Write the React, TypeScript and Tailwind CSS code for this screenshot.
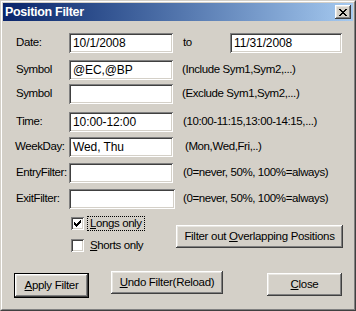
import { ReactNode } from 'react';

const raised =
  'bg-[#d4d0c8] shadow-[inset_-1px_-1px_#404040,inset_1px_1px_#ffffff,inset_-2px_-2px_#808080,inset_2px_2px_#e8e6e1]';
const sunken =
  'bg-white shadow-[inset_1px_1px_#808080,inset_-1px_-1px_#ffffff,inset_2px_2px_#404040,inset_-2px_-2px_#d4d0c8]';

const ROWS = [
  { label: 'Symbol', value: '@EC,@BP', hint: '(Include Sym1,Sym2,...)', mt: 'mt-[7px]', hintMl: 'ml-[9px]', w: 'w-[104px]' },
  { label: 'Symbol', value: '', hint: '(Exclude Sym1,Sym2,...)', mt: 'mt-[4px]', hintMl: 'ml-[9px]', w: 'w-[104px]' },
  { label: 'Time:', value: '10:00-12:00', hint: '(10:00-11:15,13:00-14:15,...)', mt: 'mt-[8px]', hintMl: 'ml-[10px]', w: 'w-[104px]' },
  { label: 'WeekDay:', value: 'Wed, Thu', hint: '(Mon,Wed,Fri,..)', mt: 'mt-[5px]', hintMl: 'ml-[12px]', w: 'w-[104px]' },
  { label: 'EntryFilter:', value: '', hint: '(0=never, 50%, 100%=always)', mt: 'mt-[6px]', hintMl: 'ml-[10px]', w: 'w-[104px]' },
  { label: 'ExitFilter:', value: '', hint: '(0=never, 50%, 100%=always)', mt: 'mt-[6px]', hintMl: 'ml-[8px]', w: 'w-[106px]' },
];

function Field({ value, w }: { value: string; w: string }) {
  return (
    <div className={`${sunken} ${w} h-[20px] flex items-center pl-[4px] text-[12px] tracking-[-0.1px]`}>
      {value}
    </div>
  );
}

function Btn({ children, w, className = '' }: { children: ReactNode; w: string; className?: string }) {
  return (
    <div className={`${raised} ${w} h-[23px] flex items-center justify-center whitespace-nowrap text-[11.5px] tracking-[-0.3px] ${className}`}>
      {children}
    </div>
  );
}

export default function App() {
  return (
    <div
      className="w-[356px] h-[311px] border border-t-[#d4d0c8] border-l-[#d4d0c8] border-r-[#404040] border-b-[#404040] bg-[#d4d0c8] text-black"
      style={{ fontFamily: '"Liberation Sans", Arial, sans-serif' }}
    >
      <div className="h-full border border-t-white border-l-white border-r-[#808080] border-b-[#808080] p-px flex flex-col">
        {/* Title bar */}
        <div className="h-[18px] shrink-0 flex items-center justify-between bg-gradient-to-r from-[#0a246a] to-[#a6caf0] pl-[2px] pr-[2px]">
          <span className="text-white font-bold text-[12.5px] tracking-[-0.3px]">Position Filter</span>
          <div className={`${raised} w-[16px] h-[14px] flex items-center justify-center`}>
            <svg width="8" height="7" viewBox="0 0 8 7" shapeRendering="crispEdges">
              <path d="M0 0h2v1h-2zM6 0h2v1h-2zM1 1h2v1h-2zM5 1h2v1h-2zM2 2h4v1h-4zM3 3h2v1h-2zM2 4h4v1h-4zM1 5h2v1h-2zM5 5h2v1h-2zM0 6h2v1h-2zM6 6h2v1h-2z" fill="#000" />
            </svg>
          </div>
        </div>

        {/* Form */}
        <div className="pl-[13px] text-[11.5px] tracking-[-0.4px]">
          <div className="mt-[12px] h-[20px] flex items-center">
            <span className="w-[53px]">Date:</span>
            <Field value="10/1/2008" w="w-[104px]" />
            <span className="ml-[10px] w-[47px]">to</span>
            <Field value="11/31/2008" w="w-[112px]" />
          </div>
          {ROWS.map((r, i) => (
            <div key={i} className={`${r.mt} h-[20px] flex items-center`}>
              <span className={`whitespace-nowrap ${r.label === 'WeekDay:' ? '-ml-[1px] w-[54px]' : 'w-[53px]'}`}>{r.label}</span>
              <Field value={r.value} w={r.w} />
              <span className={`${r.hintMl} whitespace-nowrap`}>{r.hint}</span>
            </div>
          ))}

          {/* Options */}
          <div className="mt-[6px] flex">
            <div className="ml-[55px] w-[105px] flex flex-col gap-[5px]">
              <div className="h-[17px] flex items-center">
                <div className={`${sunken} w-[13px] h-[13px] flex items-center justify-center`}>
                  <svg width="7" height="7" viewBox="0 0 7 7" shapeRendering="crispEdges">
                    <path d="M6 0h1v3h-1zM5 1h1v3h-1zM4 2h1v3h-1zM3 3h1v3h-1zM2 4h1v3h-1zM1 3h1v3h-1zM0 2h1v3h-1z" fill="#000" />
                  </svg>
                </div>
                <span className="ml-[3px] px-[2px] border border-dotted border-black leading-[13px]">
                  <u>L</u>ongs only
                </span>
              </div>
              <div className="h-[17px] flex items-center">
                <div className={`${sunken} w-[13px] h-[13px]`} />
                <span className="ml-[6px]">
                  <u>S</u>horts only
                </span>
              </div>
            </div>
            <Btn w="w-[167px]" className="mt-[10px] h-[22px]">
              Filter out&nbsp;<u>O</u>verlapping Positions
            </Btn>
          </div>
        </div>

        {/* Bottom buttons */}
        <div className="mt-[17px] pl-[11px] flex items-start">
          <div className="mt-[2px] border border-black">
            <Btn w="w-[73px]" className="h-[21px]">
              <u>A</u>pply Filter
            </Btn>
          </div>
          <Btn w="w-[112px]" className="ml-[22px]">
            <u>U</u>ndo Filter(Reload)
          </Btn>
          <Btn w="w-[75px]" className="ml-[44px] mt-[2px]">
            <u>C</u>lose
          </Btn>
        </div>
      </div>
    </div>
  );
}
